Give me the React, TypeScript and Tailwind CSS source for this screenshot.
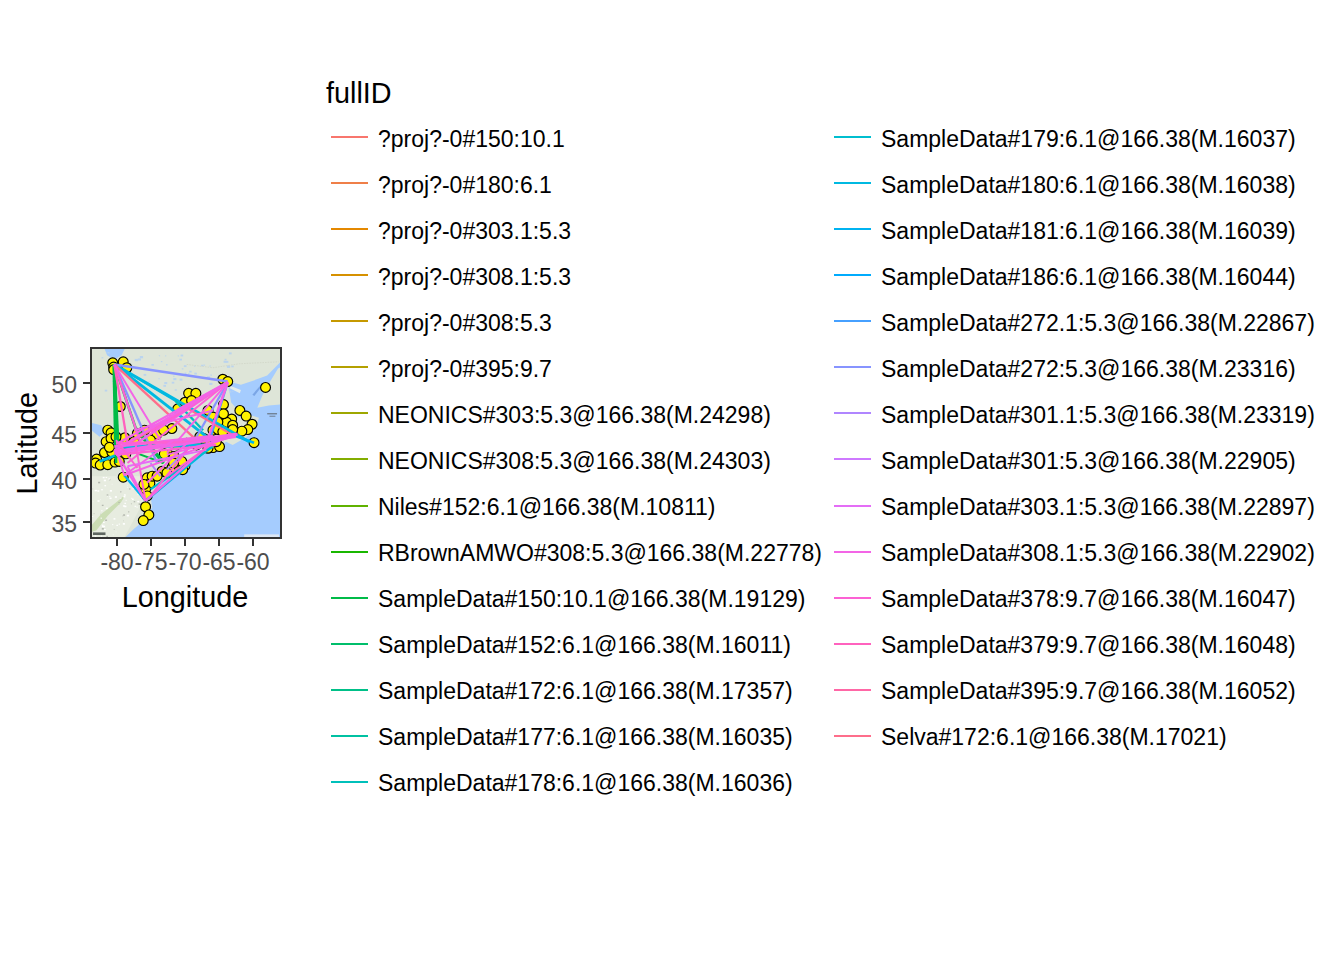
import React from "react";

const left = [
  ["bg-[#F8766D]", "?proj?-0#150:10.1"],
  ["bg-[#EF7F48]", "?proj?-0#180:6.1"],
  ["bg-[#E48800]", "?proj?-0#303.1:5.3"],
  ["bg-[#D69100]", "?proj?-0#308.1:5.3"],
  ["bg-[#C69900]", "?proj?-0#308:5.3"],
  ["bg-[#B4A000]", "?proj?-0#395:9.7"],
  ["bg-[#9EA700]", "NEONICS#303:5.3@166.38(M.24298)"],
  ["bg-[#83AD00]", "NEONICS#308:5.3@166.38(M.24303)"],
  ["bg-[#60B200]", "Niles#152:6.1@166.38(M.10811)"],
  ["bg-[#19B700]", "RBrownAMWO#308:5.3@166.38(M.22778)"],
  ["bg-[#00BB48]", "SampleData#150:10.1@166.38(M.19129)"],
  ["bg-[#00BE6B]", "SampleData#152:6.1@166.38(M.16011)"],
  ["bg-[#00C088]", "SampleData#172:6.1@166.38(M.17357)"],
  ["bg-[#00C1A2]", "SampleData#177:6.1@166.38(M.16035)"],
  ["bg-[#00C0BA]", "SampleData#178:6.1@166.38(M.16036)"],
];
const right = [
  ["bg-[#00BECF]", "SampleData#179:6.1@166.38(M.16037)"],
  ["bg-[#00B9E1]", "SampleData#180:6.1@166.38(M.16038)"],
  ["bg-[#00B3F1]", "SampleData#181:6.1@166.38(M.16039)"],
  ["bg-[#00ABFD]", "SampleData#186:6.1@166.38(M.16044)"],
  ["bg-[#46A0FF]", "SampleData#272.1:5.3@166.38(M.22867)"],
  ["bg-[#8794FF]", "SampleData#272:5.3@166.38(M.23316)"],
  ["bg-[#B086FF]", "SampleData#301.1:5.3@166.38(M.23319)"],
  ["bg-[#CE79FF]", "SampleData#301:5.3@166.38(M.22905)"],
  ["bg-[#E46DF6]", "SampleData#303.1:5.3@166.38(M.22897)"],
  ["bg-[#F365E6]", "SampleData#308.1:5.3@166.38(M.22902)"],
  ["bg-[#FC61D4]", "SampleData#378:9.7@166.38(M.16047)"],
  ["bg-[#FF62BE]", "SampleData#379:9.7@166.38(M.16048)"],
  ["bg-[#FF67A6]", "SampleData#395:9.7@166.38(M.16052)"],
  ["bg-[#FE6E8B]", "Selva#172:6.1@166.38(M.17021)"],
];

function Column({ items, width }: { items: string[][]; width: string }) {
  return (
    <div className={`flex flex-col ${width}`}>
      {items.map(([c, t]) => (
        <div key={t} className="flex h-[46.07px] items-center">
          <div className={`ml-[5px] h-[2px] w-[37px] -translate-y-[2px] ${c}`} />
          <span className="ml-[10px] whitespace-nowrap text-[23px] leading-none text-black">{t}</span>
        </div>
      ))}
    </div>
  );
}

// [x1,y1,x2,y2,colour,width] in the map's own units (3 per screen pixel)
const lines: [number, number, number, number, string, number][] = [
  [295, 395, 345, 376, "#00B9E1", 8],
  [340, 100, 345, 345, "#00BB48", 12],
  [340, 100, 352, 345, "#00BB48", 8],
  [345, 345, 345, 400, "#00BB48", 8],
  [340, 100, 405, 295, "#00BB48", 8],
  [405, 295, 490, 400, "#00BB48", 11],
  [350, 350, 600, 340, "#00BE6B", 7],
  [490, 400, 380, 360, "#00BB48", 6],
  [640, 345, 345, 352, "#00B9E1", 11],
  [340, 100, 750, 335, "#00B9E1", 9],
  [340, 100, 640, 335, "#00B9E1", 9],
  [340, 100, 525, 210, "#00B9E1", 7],
  [525, 210, 610, 300, "#00C0BA", 7],
  [370, 437, 435, 515, "#00B3F1", 7],
  [435, 515, 640, 345, "#00B9E1", 8],
  [450, 480, 640, 350, "#00BECF", 7],
  [700, 315, 765, 338, "#00B3F1", 8],
  [340, 100, 685, 152, "#8794FF", 8],
  [340, 100, 470, 400, "#8794FF", 7],
  [685, 155, 590, 320, "#8794FF", 7],
  [685, 155, 630, 330, "#46A0FF", 7],
  [450, 400, 480, 440, "#B086FF", 6],
  [560, 360, 500, 420, "#B086FF", 6],
  [340, 100, 590, 330, "#FE6E8B", 7],
  [340, 365, 565, 235, "#FE6E8B", 7],
  [565, 235, 700, 315, "#FE6E8B", 6],
  [340, 100, 420, 340, "#FC61D4", 7],
  [340, 100, 380, 340, "#FF62BE", 7],
  [340, 100, 480, 330, "#F365E6", 6],
  [685, 155, 340, 362, "#F365E6", 8],
  [685, 155, 350, 340, "#F365E6", 7],
  [685, 155, 400, 345, "#F365E6", 7],
  [685, 155, 450, 305, "#FC61D4", 7],
  [685, 155, 530, 240, "#F365E6", 8],
  [685, 155, 500, 370, "#F365E6", 6],
  [685, 155, 380, 400, "#FC61D4", 6],
  [685, 155, 620, 340, "#F365E6", 7],
  [685, 155, 650, 250, "#F365E6", 6],
  [340, 365, 715, 312, "#F365E6", 10],
  [340, 350, 640, 318, "#F365E6", 9],
  [345, 340, 600, 335, "#FC61D4", 8],
  [340, 372, 710, 320, "#F365E6", 7],
  [345, 375, 650, 345, "#FC61D4", 7],
  [370, 437, 345, 355, "#F365E6", 6],
  [370, 437, 520, 330, "#F365E6", 6],
  [370, 437, 680, 325, "#F365E6", 6],
  [435, 515, 340, 360, "#F365E6", 7],
  [435, 515, 405, 345, "#FC61D4", 6],
  [435, 515, 380, 410, "#F365E6", 6],
  [435, 515, 640, 335, "#F365E6", 7],
  [450, 500, 570, 350, "#FC61D4", 6],
  [380, 410, 620, 360, "#E46DF6", 6],
  [410, 415, 345, 330, "#FC61D4", 6],
  [500, 375, 700, 320, "#F365E6", 6],
  [400, 300, 640, 240, "#F365E6", 6],
  [440, 300, 680, 160, "#F365E6", 6],
  [500, 440, 640, 340, "#FC61D4", 6],
  [440, 460, 560, 340, "#F365E6", 6],
];

const points: [number, number][] = [
  [335, 95], [338, 108], [338, 116], [367, 92], [378, 110],
  [670, 145], [685, 152], [800, 170],
  [566, 188], [588, 188], [555, 215], [575, 210], [533, 235], [358, 228],
  [625, 240], [672, 222], [660, 258], [722, 240], [741, 257], [697, 266], [682, 276], [759, 282],
  [746, 298], [728, 303], [765, 338], [515, 295], [672, 250], [640, 260], [700, 285], [655, 275],
  [320, 300], [330, 308], [315, 335], [330, 325], [310, 368], [286, 388], [283, 400], [297, 406],
  [320, 405], [342, 397], [332, 366], [372, 323], [385, 348], [367, 443], [355, 395], [375, 372], [325, 352], [345, 320],
  [440, 445], [448, 462], [435, 480], [440, 500], [435, 533], [445, 558], [428, 575], [455, 440], [430, 465],
  [505, 375], [492, 372], [522, 380], [485, 425], [515, 415], [535, 408], [555, 408], [548, 420], [470, 440], [500, 430],
  [640, 353], [660, 350], [650, 335], [620, 342], [432, 300], [470, 312], [400, 335], [640, 300],
  [655, 298], [670, 305], [700, 298], [612, 325], [560, 340], [590, 345], [530, 345], [410, 310], [450, 330], [490, 300],
  [600, 320], [625, 355], [545, 395], [520, 400],
];

function rng(seed: number) {
  let s = seed;
  return () => {
    s = (s * 16807) % 2147483647;
    return s / 2147483647;
  };
}
const r1 = rng(12345);
const lakes = Array.from({ length: 70 }, () => [300 + r1() * 420, 60 + r1() * 130, 1.5 + r1() * 3.5]);
const r2 = rng(777);
const towns = Array.from({ length: 110 }, () => {
  const x = 272 + r2() * 170;
  const y = 440 + r2() * 185;
  return [x, y, 1 + r2() * 2.4];
}).filter(([x, y]) => y < 627 - (x - 370) * 1.2 && x < 330 + (627 - y) * 0.9);

function MapDrawing() {
  return (
    <svg viewBox="272 53 572 572" className="block h-full w-full">
      <rect x="270" y="51" width="576" height="576" fill="#DEE5D8" />
      {/* lighter southern land and ridge */}
      <path d="M270 440 L470 440 L370 627 L270 627Z" fill="#E7ECE0" />
      <path d="M270 590 L300 555 L345 520 L375 495 L360 520 L320 560 L285 605 L270 610Z" fill="#CBDDB4" />
      {/* ocean and gulf */}
      <path
        d="M372 627 L400 600 L430 575 L455 535 L450 500 L475 470 L500 440 L540 425 L575 390 L600 372 L640 365 L680 335 L700 345 L740 322 L770 295 L780 262 L745 252 L715 262 L712 235 L695 215 L690 180 L684 158 L700 155 L725 162 L755 152 L805 134 L846 92 L846 627Z"
        fill="#A5CCFE"
      />
      <path d="M775 232 L790 195 L815 150 L838 112 L846 108 L846 222 L810 225Z" fill="#DEE5D8" />
      <path d="M725 178 L692 165 L690 172 L722 188Z" fill="#E5ECEA" />
      <path d="M760 192 L782 166 L786 170 L766 196Z" fill="#7BA6E6" />
      {/* hudson bay and great lakes */}
      <path d="M310 52 L372 52 L362 72 L340 86 L318 72Z" fill="#A5CCFE" />
      <path d="M270 278 L300 285 L312 305 L295 320 L270 300Z" fill="#A5CCFE" />
      <path d="M310 325 L345 345 L335 385 L300 360Z" fill="#A5CCFE" />
      <path d="M345 385 L395 350 L400 360 L355 395Z" fill="#A5CCFE" />
      {lakes.map(([x, y, r], i) => (
        <rect key={i} x={x} y={y} width={r * 2} height={r * 1.4} fill="#BBD4EE" />
      ))}
      {towns.map(([x, y, r], i) => (
        <rect key={i} x={x} y={y} width={r * 2} height={r * 1.5} fill={i % 3 ? "#FFFFFF" : "#B3B7AE"} />
      ))}
      <path d="M560 100 L640 110 L720 98 L840 92" stroke="#C7CBBE" strokeWidth="1.5" strokeDasharray="5 3" fill="none" />
      <rect x="735" y="617" width="106" height="10" fill="#DCE6F2" />
      <rect x="275" y="611" width="38" height="8" fill="#5E6660" />
      <rect x="805" y="248" width="30" height="4" fill="#6D7C8F" />
      <rect x="812" y="256" width="18" height="3" fill="#6D7C8F" />
      {lines.slice(0, 1).map(([a, b, c, d, col, w], i) => (
        <line key={i} x1={a} y1={b} x2={c} y2={d} stroke={col} strokeWidth={w} />
      ))}
      {points.map(([x, y], i) => (
        <circle key={i} cx={x} cy={y} r="15" fill="#FFF200" stroke="#000" strokeWidth="3.5" />
      ))}
      {lines.map(([a, b, c, d, col, w], i) => (
        <line key={i} x1={a} y1={b} x2={c} y2={d} stroke={col} strokeWidth={w} />
      ))}
    </svg>
  );
}

const yTicks = [
  ["50", "mt-[22px]"],
  ["45", "mt-[22px]"],
  ["40", "mt-[18px]"],
  ["35", "mt-[15px]"],
];
const xTicks = ["-80", "-75", "-70", "-65", "-60"];

export default function App() {
  return (
    <div className="flex h-[960px] w-[1344px] overflow-hidden bg-white font-['Liberation_Sans',Arial,sans-serif] text-black">
      {/* plot */}
      <div className="flex w-[326px] shrink-0 pt-[347px]">
        <div className="flex h-[192px] w-[44px] shrink-0 items-center justify-end">
          <span className="rotate-180 whitespace-nowrap pl-[2px] pr-[1px] text-[28.8px] leading-none [writing-mode:vertical-rl]">Latitude</span>
        </div>
        <div className="flex flex-col">
          <div className="flex">
            <div className="flex h-[192px] w-[46px] shrink-0 flex-col">
              {yTicks.map(([t, m]) => (
                <div key={t} className={`flex h-[28px] shrink-0 items-center justify-end ${m}`}>
                  <span className="mr-[6px] translate-y-[2px] text-[23px] leading-none text-[#4D4D4D]">{t}</span>
                  <span className="h-[2px] w-[7px] bg-[#333333]" />
                </div>
              ))}
            </div>
            <div className="h-[192px] w-[192px] shrink-0 overflow-hidden border-2 border-[#333333]">
              <MapDrawing />
            </div>
          </div>
          <div className="ml-[56px] flex">
            {xTicks.map((t) => (
              <div key={t} className="flex w-[34px] shrink-0 flex-col items-center">
                <span className="h-[7px] w-[2px] bg-[#333333]" />
                <span className="mt-[3px] text-[23px] leading-[26px] tracking-[-0.1px] text-[#4D4D4D]">{t}</span>
              </div>
            ))}
          </div>
          <div className="ml-[45px] mt-[6px] w-[192px] text-center text-[28.8px] leading-[33px]">Longitude</div>
        </div>
      </div>
      {/* legend */}
      <div className="flex flex-col pt-[77px]">
        <div className="h-[39px] text-[28.8px] leading-[33px]">fullID</div>
        <div className="flex">
          <Column items={left} width="w-[503px]" />
          <Column items={right} width="w-[510px]" />
        </div>
      </div>
    </div>
  );
}
